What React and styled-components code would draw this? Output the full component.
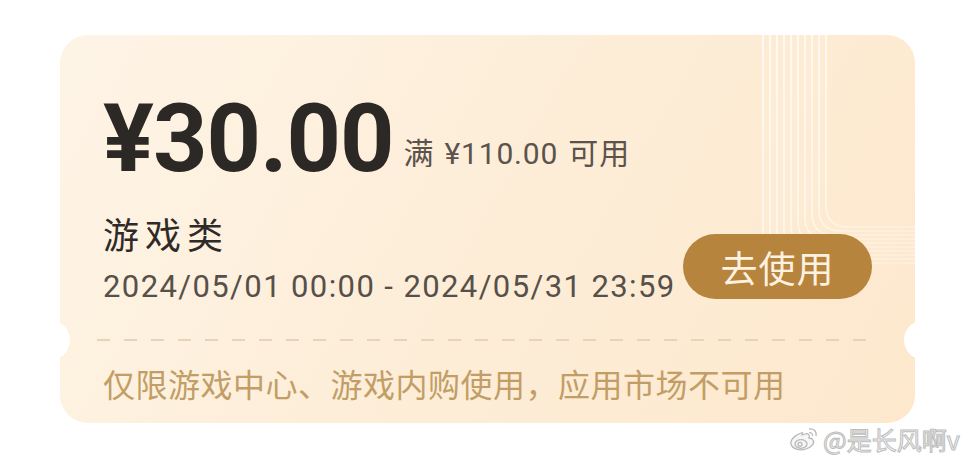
import React from "react";
import styled, { createGlobalStyle } from "styled-components";

const GlobalStyle = createGlobalStyle`
  html, body {
    margin: 0;
    padding: 0;
    background: #ffffff;
  }
  body {
    font-family: Roboto, "Noto Sans CJK SC", sans-serif;
  }
`;

const Page = styled.div`
  position: relative;
  width: 971px;
  height: 462px;
  overflow: hidden;
  background: #ffffff;
`;

const Coupon = styled.section`
  position: relative;
  box-sizing: border-box;
  width: 855px;
  height: 388px;
  margin: 35px 0 0 60px;
  border-radius: 28px;
  background: linear-gradient(120deg, #fef4e6 0%, #fdeed9 45%, #fde8cd 100%);
  overflow: hidden;
  display: flex;
  flex-direction: column;
`;

const Notch = styled.span`
  position: absolute;
  top: 285px;
  ${(p) => (p.$side === "left" ? "left: -30px;" : "right: -29px;")}
  width: 40px;
  height: 40px;
  border-radius: 50%;
  background: #ffffff;
`;

const CornerArt = styled.svg`
  position: absolute;
  top: 0;
  right: 0;
  pointer-events: none;
`;

const Main = styled.div`
  position: relative;
  padding: 56px 43px 0 43px;
  display: flex;
  flex-direction: column;
`;

const AmountLine = styled.div`
  line-height: 96px;
  white-space: nowrap;
`;

const Amount = styled.span`
  font-family: Roboto, sans-serif;
  font-size: 95px;
  font-weight: 700;
  color: #2c2825;
  letter-spacing: -1px;
`;

const Threshold = styled.span`
  margin-left: 10px;
  font-size: 30px;
  letter-spacing: 0.8px;
  word-spacing: 2px;
  color: #5b534c;
  vertical-align: 7px;
`;

const InfoRow = styled.div`
  display: flex;
  justify-content: space-between;
  align-items: flex-end;
  margin-top: -3px;
`;

const InfoText = styled.div`
  display: flex;
  flex-direction: column;
`;

const Category = styled.div`
  font-family: "Noto Sans CJK SC", sans-serif;
  font-size: 36px;
  line-height: 44px;
  letter-spacing: 6px;
  color: #2f2a27;
`;

const Period = styled.div`
  margin-top: 12px;
  font-size: 31px;
  line-height: 40px;
  letter-spacing: 1.4px;
  color: #57504a;
  white-space: nowrap;
`;

const UseButton = styled.button`
  width: 189px;
  height: 65px;
  border: none;
  border-radius: 33px;
  background: #b7843d;
  color: #fdf2e1;
  font-family: "Noto Sans CJK SC", sans-serif;
  font-size: 37px;
  letter-spacing: 1px;
  padding: 0;
  margin-bottom: 8px;
`;

const Divider = styled.div`
  margin: 32px 47px 0 37px;
  height: 2px;
  background: repeating-linear-gradient(
    to right,
    #e6d4b9 0 13px,
    transparent 13px 27px
  );
`;

const Note = styled.p`
  margin: 22px 0 0 43px;
  font-family: "Noto Sans CJK SC", sans-serif;
  font-size: 32px;
  line-height: 40px;
  letter-spacing: 0.5px;
  color: #c29e66;
  white-space: nowrap;
`;

const Watermark = styled.div`
  position: absolute;
  left: 789px;
  top: 424px;
  display: flex;
  align-items: center;
  gap: 4px;
`;

const WatermarkText = styled.span`
  font-family: "Noto Sans CJK SC", sans-serif;
  font-size: 25px;
  line-height: 30px;
  color: #f6f6f6;
  -webkit-text-stroke: 1px #bdbdbd;
`;

// concentric rounded guide lines in the upper right corner of the coupon
function Lines() {
  const items = [];
  for (let i = 0; i < 10; i++) {
    const x = 48 + i * 7;
    const y = 228 - i * 4;
    const r = 22;
    items.push(
      <path
        key={i}
        d={`M ${x} 0 V ${y - r} Q ${x} ${y} ${x + r} ${y} H 200`}
        fill="none"
        stroke="url(#lineFade)"
        strokeWidth="1.5"
      />
    );
  }
  return (
    <CornerArt width="200" height="260" viewBox="0 0 200 260">
      <defs>
        <linearGradient id="lineFade" x1="0" y1="0" x2="0.4" y2="1">
          <stop offset="0" stopColor="#ffffff" stopOpacity="0.9" />
          <stop offset="0.75" stopColor="#ffffff" stopOpacity="0.7" />
          <stop offset="1" stopColor="#ffffff" stopOpacity="0.35" />
        </linearGradient>
      </defs>
      {items}
    </CornerArt>
  );
}

function WeiboMark() {
  return (
    <svg width="30" height="26" viewBox="0 0 30 26">
      <g fill="#f6f6f6" stroke="#b9b9b9" strokeWidth="1.3">
        <path d="M12 7 C6 9 1 14 2 18 C3 23 11 25 17 23 C23 21 26 17 24 14 C23 12 21 12 20 12 C21 9 19 7 16 8 L13 9 C14 7 14 6 12 7 Z" />
        <ellipse cx="12" cy="18" rx="6" ry="4.3" />
        <circle cx="11" cy="18.3" r="2" />
        <path d="M20 3 C24 2 28 5 27 10" fill="none" />
        <path d="M20 7 C22 6 24 8 23.5 10" fill="none" />
      </g>
    </svg>
  );
}

export default function App() {
  return (
    <Page>
      <GlobalStyle />
      <Coupon>
        <Lines />
        <Notch $side="left" />
        <Notch $side="right" />
        <Main>
          <AmountLine>
            <Amount>¥30.00</Amount>
            <Threshold>满 ¥110.00 可用</Threshold>
          </AmountLine>
          <InfoRow>
            <InfoText>
              <Category>游戏类</Category>
              <Period>2024/05/01 00:00 - 2024/05/31 23:59</Period>
            </InfoText>
            <UseButton>去使用</UseButton>
          </InfoRow>
        </Main>
        <Divider />
        <Note>仅限游戏中心、游戏内购使用，应用市场不可用</Note>
      </Coupon>
      <Watermark>
        <WeiboMark />
        <WatermarkText>@是长风啊v</WatermarkText>
      </Watermark>
    </Page>
  );
}
